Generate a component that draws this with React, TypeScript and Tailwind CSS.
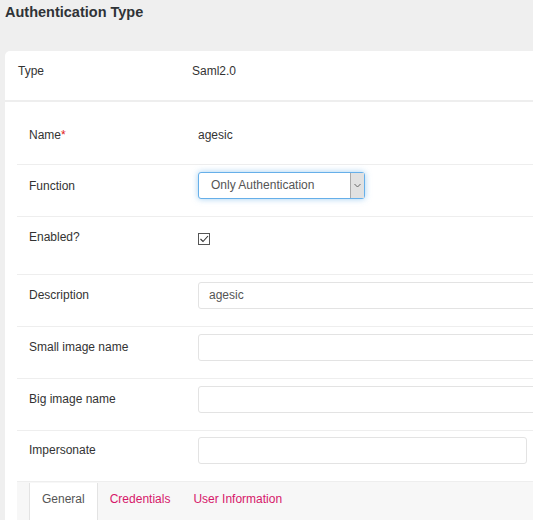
import React from "react";

const font = { fontFamily: '"Liberation Sans", Arial, sans-serif' };

function Label({ children, pt }: { children: React.ReactNode; pt?: string }) {
  return (
    <div
      className={
        "w-[181px] shrink-0 pl-[12px] text-[12px] leading-[14px] text-[#333] " + (pt ?? "pt-[13px]")
      }
    >
      {children}
    </div>
  );
}

function InputRow({ label, value }: { label: string; value?: string }) {
  return (
    <div className="flex h-[52px] border-b border-[#eeeeee]">
      <Label>{label}</Label>
      <div className="flex-1 pt-[7px]">
        <div className="h-[27px] rounded-[3px] border border-[#e3e3e3] bg-white pl-[10px] text-[12px] leading-[25px] text-[#555]">
          {value}
        </div>
      </div>
    </div>
  );
}

export default function App() {
  return (
    <div className="h-[520px] w-[533px] overflow-hidden bg-[#efefef]" style={font}>
      <div className="h-[51px] pl-[5px] pt-[4px] text-[14.5px] font-bold leading-[16px] text-[#2f3337]">
        Authentication Type
      </div>
      <div className="ml-[5px] w-[560px] rounded-tl-[5px] bg-white">
        <div className="flex h-[51px] border-b-2 border-[#eeeeee] pl-[13px] pt-[13px] text-[12px] leading-[14px] text-[#333]">
          <div className="w-[174px]">Type</div>
          <div>Saml2.0</div>
        </div>
        <div className="pl-[12px] pt-[11px]">
          <div className="flex h-[52px] border-b border-[#eeeeee]">
            <Label pt="pt-[15px]">
              Name<span className="text-[#e02020]">*</span>
            </Label>
            <div className="pt-[15px] text-[12px] leading-[14px] text-[#333]">agesic</div>
          </div>
          <div className="flex h-[52px] border-b border-[#eeeeee]">
            <Label pt="pt-[14px]">Function</Label>
            <div className="pt-[7px]">
              <div className="flex h-[27px] w-[167px] rounded-[3px] border border-[#66afe9] bg-white shadow-[0_0_6px_rgba(102,175,233,0.6)]">
                <div className="flex-1 pl-[12px] text-[12px] leading-[25px] text-[#555]">
                  Only Authentication
                </div>
                <div className="flex w-[14px] items-center justify-center border-l border-[#aaa] bg-[#e1e1e1]">
                  <svg width="7" height="5" viewBox="0 0 7 5">
                    <path d="M0.5 1 L3.5 4 L6.5 1" fill="none" stroke="#666" strokeWidth="1" />
                  </svg>
                </div>
              </div>
            </div>
          </div>
          <div className="flex h-[58px] border-b border-[#eeeeee]">
            <Label>Enabled?</Label>
            <div className="pt-[16px]">
              <svg width="12" height="12" viewBox="0 0 12 12">
                <rect x="0.5" y="0.5" width="11" height="11" fill="white" stroke="#555" />
                <path d="M2.5 6 L5 8.5 L10 3" fill="none" stroke="#333" strokeWidth="1.1" />
              </svg>
            </div>
          </div>
          <InputRow label="Description" value="agesic" />
          <InputRow label="Small image name" />
          <InputRow label="Big image name" />
          <div className="flex h-[50px]">
            <Label pt="pt-[12px]">Impersonate</Label>
            <div className="pt-[6px]">
              <div className="h-[27px] w-[329px] rounded-[3px] border border-[#e3e3e3] bg-white" />
            </div>
          </div>
          <div className="flex h-[40px] border-t border-[#eeeeee] bg-[#f7f7f7] pl-[12px] pt-[1px] text-[12px] leading-[14px]">
            <div className="h-[39px] border-x border-[#e3e3e3] bg-white px-[12px] pt-[9px] text-[#555]">
              General
            </div>
            <div className="px-[12px] pt-[9px] text-[#d6176a]">Credentials</div>
            <div className="pl-[11px] pt-[9px] text-[#d6176a]">User Information</div>
          </div>
        </div>
      </div>
    </div>
  );
}
